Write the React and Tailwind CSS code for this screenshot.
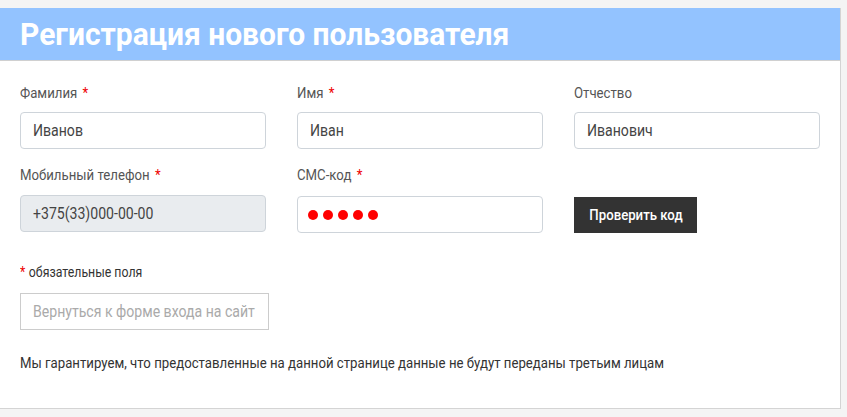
import React from "react";

const font = { fontFamily: "Roboto, 'Noto Sans', sans-serif" };

function Label({ children, required }) {
  return (
    <div className="h-[20px] text-[15px] leading-[20px] text-[#555]">
      <span className="inline-block origin-left scale-x-[0.88] whitespace-nowrap">
        {children}
        {required && <span className="ml-[6px] text-[#e00]">*</span>}
      </span>
    </div>
  );
}

function Field({ value, disabled }) {
  return (
    <div
      className={
        "flex h-[37px] items-center rounded-[4px] border border-[#ced4da] px-[12px] text-[16px] text-[#444] " +
        (disabled ? "bg-[#e9ecef]" : "bg-white")
      }
    >
      <span className="inline-block origin-left scale-x-[0.88] whitespace-nowrap">{value}</span>
    </div>
  );
}

export default function App() {
  return (
    <div className="h-[417px] w-[847px] bg-[#f4f4f4] pt-[8px]" style={font}>
      <div className="h-[401px] w-[841px] border-r border-b border-[#d4d4d4] bg-white">
        <div className="flex h-[53px] items-center border-b border-[#d0d0d0] bg-[#93c3ff] px-[20px]">
          <h1 className="inline-block origin-left scale-x-[0.937] whitespace-nowrap text-[32px] font-bold leading-none text-white">
            Регистрация нового пользователя
          </h1>
        </div>

        <div className="px-[20px] pt-[22px]">
          <div className="grid grid-cols-3 gap-x-[31px] w-[800px]">
            <div>
              <Label required>Фамилия</Label>
              <div className="mt-[9px]"><Field value="Иванов" /></div>
            </div>
            <div>
              <Label required>Имя</Label>
              <div className="mt-[9px]"><Field value="Иван" /></div>
            </div>
            <div>
              <Label>Отчество</Label>
              <div className="mt-[9px]"><Field value="Иванович" /></div>
            </div>

            <div className="mt-[16px]">
              <Label required>Мобильный телефон</Label>
              <div className="mt-[10px]"><Field value="+375(33)000-00-00" disabled /></div>
            </div>
            <div className="mt-[16px]">
              <Label required>СМС-код</Label>
              <div className="mt-[11px] flex h-[37px] items-center gap-[5px] rounded-[4px] border border-[#ced4da] px-[10px]">
                {[0, 1, 2, 3, 4].map((i) => (
                  <span key={i} className="h-[10px] w-[10px] rounded-full bg-[#ff0000]" />
                ))}
              </div>
            </div>
            <div className="mt-[16px] flex items-end">
              <button className="flex h-[36px] w-[123px] items-center justify-center bg-[#333] text-[15px] font-medium text-white">
                <span className="inline-block scale-x-[0.88] whitespace-nowrap">Проверить код</span>
              </button>
            </div>
          </div>

          <div className="mt-[29px] text-[14px] leading-[20px] text-[#333]">
            <span className="inline-block origin-left scale-x-[0.88] whitespace-nowrap">
              <span className="mr-[4px] text-[#e00]">*</span>обязательные поля
            </span>
          </div>

          <button className="mt-[11px] flex h-[37px] w-[249px] items-center border border-[#ccc] bg-white px-[12px] text-[16px] text-[#aaa]">
            <span className="inline-block origin-left scale-x-[0.88] whitespace-nowrap">Вернуться к форме входа на сайт</span>
          </button>

          <p className="mt-[23px] text-[15px] leading-[20px] text-[#333]">
            <span className="inline-block origin-left scale-x-[0.88] whitespace-nowrap">
              Мы гарантируем, что предоставленные на данной странице данные не будут переданы третьим лицам
            </span>
          </p>
        </div>
      </div>
    </div>
  );
}
